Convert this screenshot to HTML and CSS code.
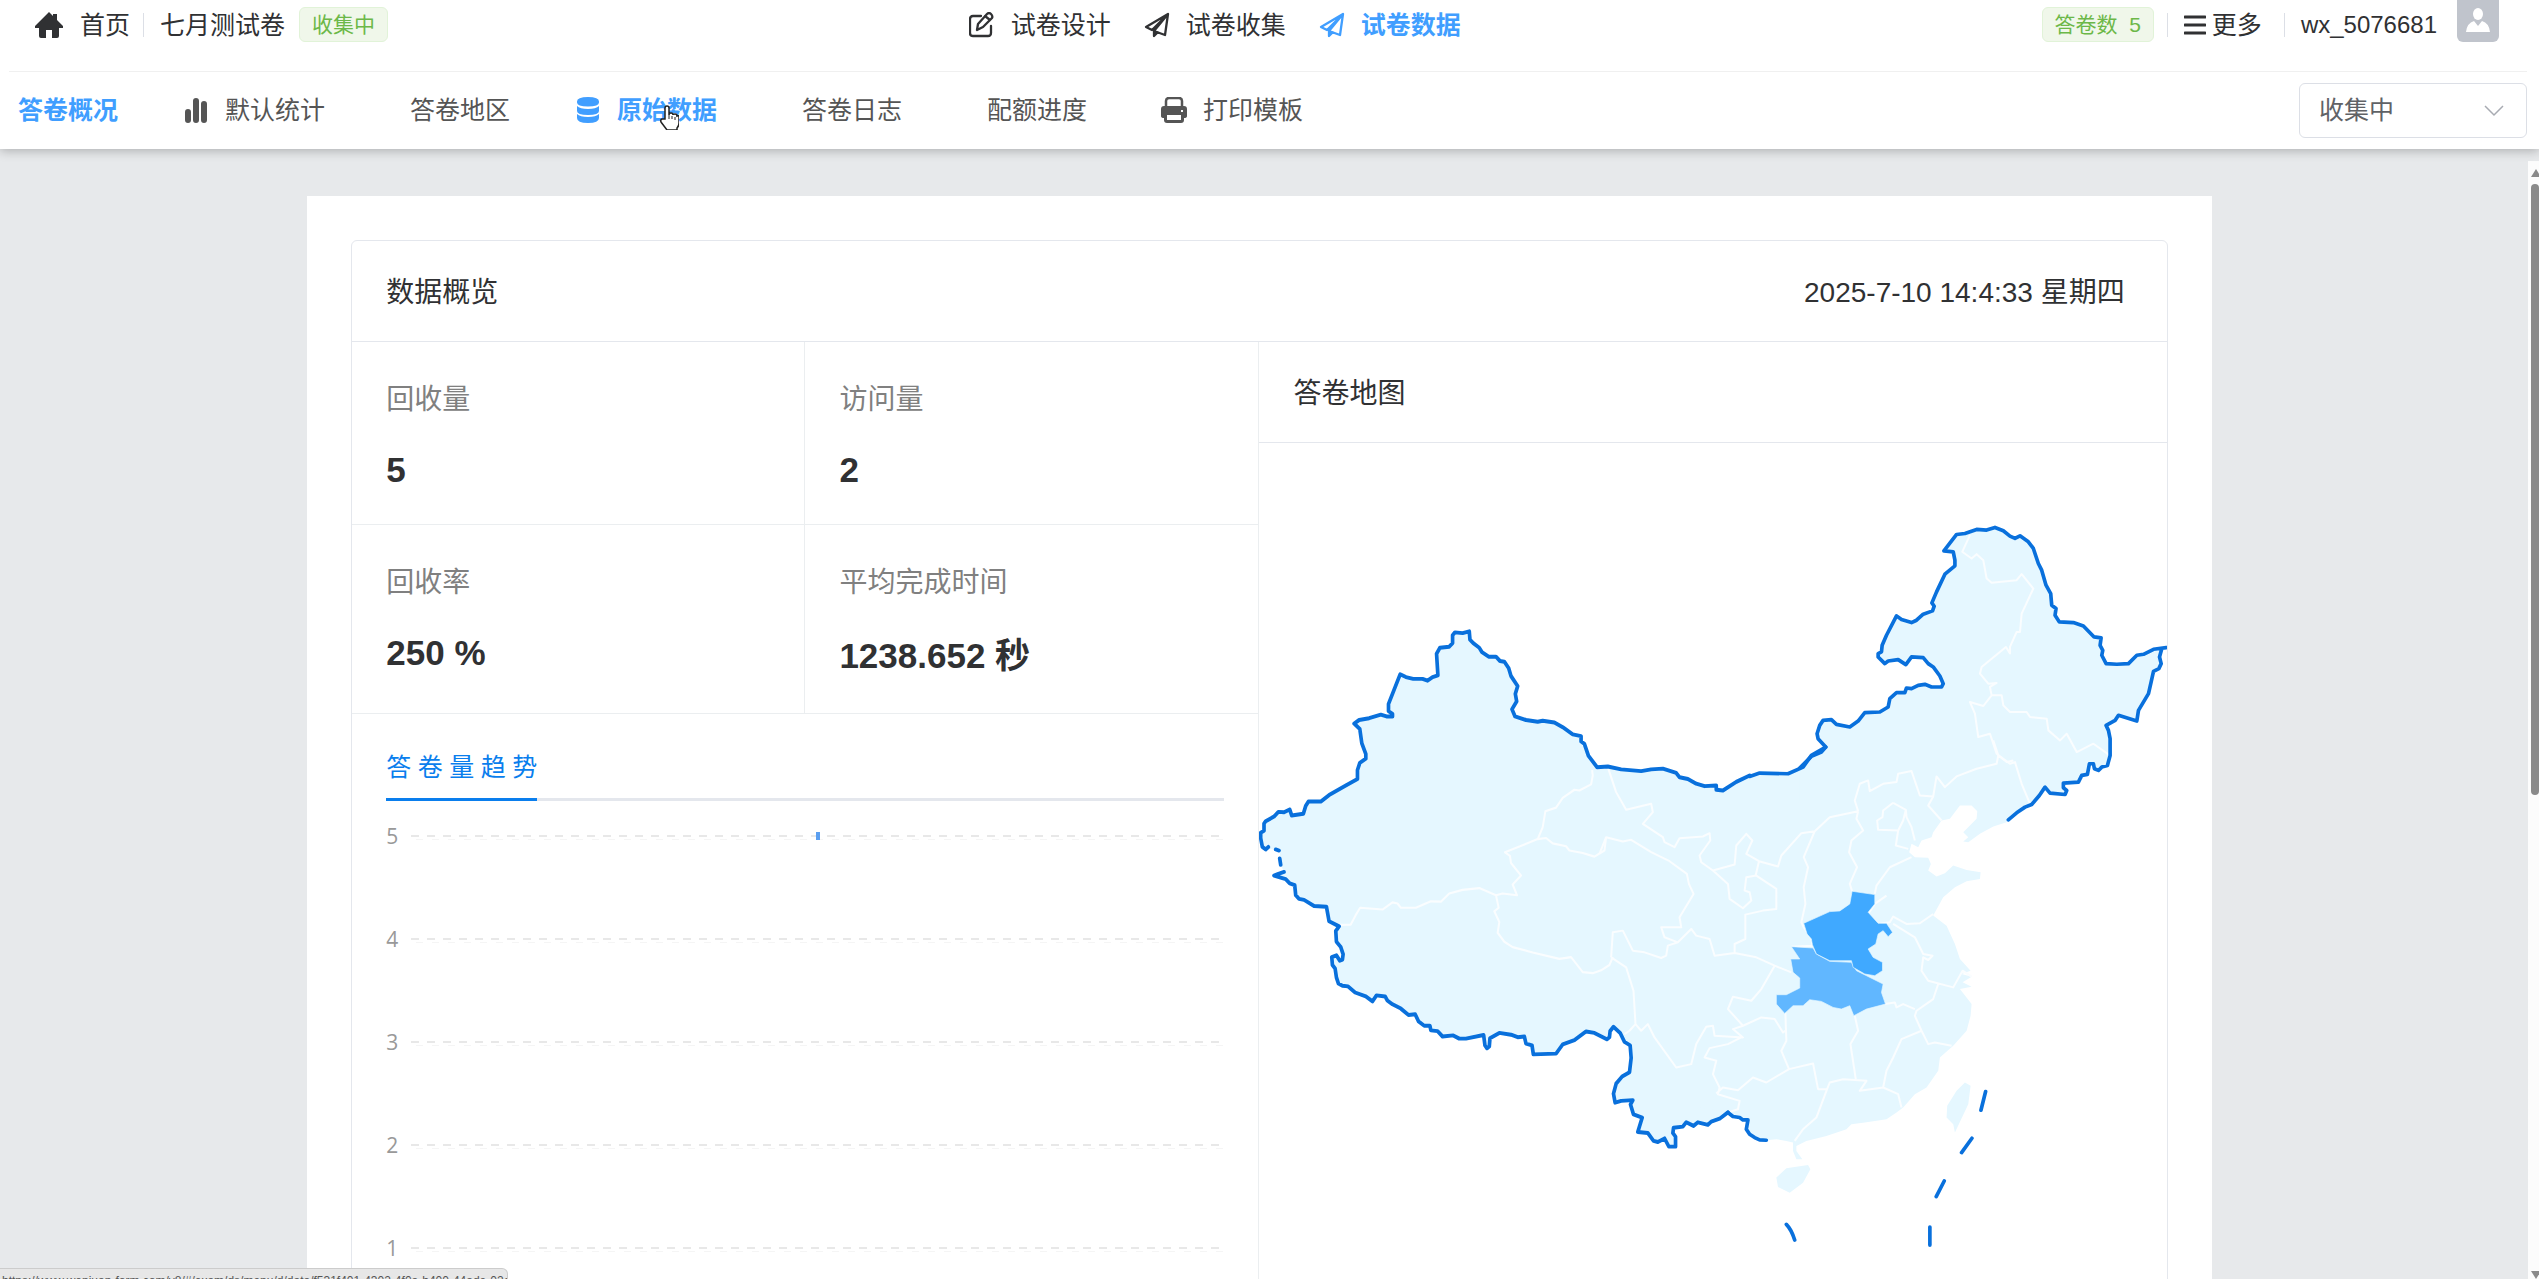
FILE: index.html
```html
<!DOCTYPE html>
<html lang="zh-CN">
<head>
<meta charset="utf-8">
<title>试卷数据 - 答卷概况</title>
<link rel="stylesheet" href="styles.css">
</head>
<body>
<svg class="defs" aria-hidden="true">
  <symbol id="plane" viewBox="0 0 26 26"><path d="M24 2 2 15l6 3zM24 2 10 19l11 4zM10 19v5l4-4" fill="none" stroke="currentColor" stroke-width="2.300" stroke-linejoin="round"/><path d="M9 18v7l6-5z" fill="currentColor"/></symbol>
</svg>
<header class="header">
  <div class="topbar">
    <div class="top-left">
      <a class="home" href="#"><svg class="home-icon" viewBox="0 0 28 26"><path d="M14 0 18 4V2h4v6l6 6v2h-4v8q0 2-2 2h-5v-8h-6v8H6q-2 0-2-2v-8H0v-2z" fill="currentColor"/></svg>首页</a>
      <span class="divider"></span>
      <span>七月测试卷</span>
      <span class="tag">收集中</span>
    </div>
    <nav class="top-nav">
      <a href="#"><svg class="nav-icon" viewBox="0 0 26 26"><path d="M12 4H4q-3 0-3 3v14q0 3 3 3h15q3 0 3-3v-7M8 18l1-6 9-10q2-2 4-0t1 4l-9 9zM16 4l5 4" fill="none" stroke="currentColor" stroke-width="2.300" stroke-linecap="round" stroke-linejoin="round"/></svg>试卷设计</a>
      <a href="#"><svg class="nav-icon"><use href="#plane"/></svg>试卷收集</a>
      <a class="active" href="#"><svg class="nav-icon"><use href="#plane"/></svg>试卷数据</a>
    </nav>
    <div class="top-right">
      <span class="tag">答卷数&nbsp; 5</span>
      <span class="divider"></span>
      <button class="more" type="button"><svg class="more-icon" viewBox="0 0 22 20"><path d="M1 2h20M1 10h20M1 18h20" stroke="currentColor" stroke-width="3" stroke-linecap="round"/></svg>更多</button>
      <span class="divider"></span>
      <span class="user">wx_5076681</span>
      <svg class="avatar" viewBox="0 0 42 42"><ellipse cx="21" cy="14" rx="5" ry="6" fill="#fff"/><path d="M9 32q1-9 8-11l4 5 4-5q7 2 8 11z" fill="#fff"/></svg>
    </div>
  </div>
  <div class="subbar">
    <nav class="sub-nav">
      <a class="active" href="#">答卷概况</a>
      <a href="#"><svg class="sub-icon" viewBox="0 0 34 26"><path d="M9 15v8M17 4v19M25 7v16" stroke="currentColor" stroke-width="6" stroke-linecap="round"/></svg>默认统计</a>
      <a class="plain" href="#">答卷地区</a>
      <a class="active" href="#"><svg class="sub-icon" viewBox="0 0 34 26"><path d="M6 4.500q0-4.500 11-4.500t11 4.500v1q0 4-11 4t-11-4zM6 9q3 3 11 3t11-3v5q0 4-11 4t-11-4zM6 17q3 3 11 3t11-3v4q0 5-11 5t-11-5z" fill="currentColor"/></svg>原始数据
        <svg class="cursor" viewBox="0 0 20 25"><path d="M6 14V3q0-2 2-2t2 2v7q0-2 2-2t2 2q0-1 2-1t2 2q2-1 2 1v6q0 3-2 5v2H8l-6-8q-1-2 1-3z" fill="#fff" stroke="#222" stroke-width="1.500"/><path d="M10 10v4M13 11v3M16 12v3" stroke="#222"/></svg></a>
      <a class="plain" href="#">答卷日志</a>
      <a class="plain" href="#">配额进度</a>
      <a class="print" href="#"><svg class="sub-icon" viewBox="0 0 34 26"><path d="M9 9V4q0-3 3-3h10q3 0 3 3v5" fill="none" stroke="currentColor" stroke-width="2.500"/><path d="M7 9h20q3 0 3 3v7q0 2-3 2v2q0 3-3 3H10q-3 0-3-3v-2q-3 0-3-2v-7q0-3 3-3z" fill="currentColor"/><path d="M10 18h14v5H10zM24 13h2v2h-2z" fill="#fff"/></svg>打印模板</a>
    </nav>
    <div class="select-box">
      <select class="status" aria-label="收集状态"><option>收集中</option></select>
      <svg class="chevron" viewBox="0 0 20 12"><path d="m1 1 9 9 9-9" fill="none" stroke="currentColor" stroke-width="1.500"/></svg>
    </div>
  </div>
</header>
<div class="viewport">
  <main class="content">
    <div class="panel">
      <section class="card">
        <div class="card-head"><span>数据概览</span><time>2025-7-10 14:4:33 星期四</time></div>
        <div class="card-body">
          <div class="left">
            <dl class="stats">
              <div class="stat"><dt>回收量</dt><dd>5</dd></div>
              <div class="stat"><dt>访问量</dt><dd>2</dd></div>
              <div class="stat"><dt>回收率</dt><dd>250 %</dd></div>
              <div class="stat"><dt>平均完成时间</dt><dd class="tall">1238.652 秒</dd></div>
            </dl>
            <div class="trend">
              <div class="tabs"><button class="tab" type="button">答 卷 量 趋 势</button></div>
              <div class="chart">
                <div class="tick"><span>5</span><div class="grid-line"><i class="bar"></i></div></div>
                <div class="tick"><span>4</span><div class="grid-line"></div></div>
                <div class="tick"><span>3</span><div class="grid-line"></div></div>
                <div class="tick"><span>2</span><div class="grid-line"></div></div>
                <div class="tick"><span>1</span><div class="grid-line"></div></div>
                <div class="tick"><span>0</span><div class="grid-line"></div></div>
              </div>
            </div>
          </div>
          <div class="right">
            <div class="map-head">答卷地图</div>
            <svg class="map" viewBox="1260 443 906 836" role="img" aria-label="答卷地图">
              <g class="land">
                <path transform="translate(1250 600) scale(.33333 .35714)" d="M1500 490 1420 532 1400 518 1365 520 1315 500 1290 495 1280 483 1240 471 1175 478 1115 473 1075 465 1043 467 1017 435 1005 402 995 380 970 375 915 342 880 337 830 335 797 325 788 305 802 283 803 240 785 212 778 190 765 172 740 158 718 158 698 145 672 120 660 87 617 90 610 125 572 133 562 150 566 210 535 225 492 220 453 207 418 290 430 325 395 320 315 345 332 360 338 400 350 440 332 455 325 500 240 545 215 563 178 563 163 597 128 602 122 585 88 592 50 618 45 645 35 655 40 690 55 695 80 697 92 700 95 740 105 760 75 770 110 780 137 797 142 830 165 838 195 855 232 857 240 898 270 912 260 930 262 955 280 985 280 1005 262 993 248 998 262 1050 268 1072 297 1080 318 1097 370 1122 382 1105 408 1108 430 1130 478 1160 498 1158 508 1180 542 1195 580 1218 612 1217 650 1226 703 1216 713 1253 722 1225 750 1210 805 1222 825 1220 830 1240 848 1245 852 1270 920 1268 940 1242 1010 1206 1035 1210 1072 1228 1092 1193 1125 1235 1142 1245 1140 1320 1100 1352 1092 1380 1097 1405 1150 1398 1152 1438 1178 1447 1165 1487 1195 1490 1212 1512 1245 1505 1258 1528 1278 1528 1272 1475 1310 1462 1332 1470 1350 1462 1375 1467 1410 1450 1435 1432 1500 1440Z"/>
                <path transform="translate(1600 740) scale(.33333)" d="M300 130 350 137 370 150 440 112 480 98 565 100 610 80 635 45 678 20 660 0H1330V140L1300 190 1228 235 1220 245 1180 258 1140 280 1105 305 1090 303 1105 290 1090 275 1130 235 1132 212 1115 195 1080 195 1050 235 1025 240 1000 275 995 290 965 300 955 320 935 310 928 335 945 350 985 352 993 370 985 390 1010 408 1035 398 1060 375 1100 388 1142 395 1140 415 1100 422 1065 440 1030 470 1000 525 1040 555 1065 610 1080 655 1112 690 1085 700 1115 708 1088 725 1115 738 1080 745 1115 790 1112 825 1100 870 1060 915 1020 950 1015 990 980 1040 945 1060 910 1100 890 1115 860 1135 795 1145 755 1150 740 1165 680 1185 620 1200 590 1215 590 1230 608 1255 590 1255 580 1230 580 1205 560 1200 530 1195 500 1198 465 1190 440 1165 445 1137 400 1130 385 1115 300 1100ZM1095 1025 1112 1035 1105 1090 1065 1175 1060 1150 1040 1130 1042 1095 1070 1050ZM530 1310 560 1282 625 1272 632 1285 610 1325 570 1355 535 1338Z"/>
                <path transform="translate(1800 500) scale(.33333)" d="M0 803 35 768 78 740 52 705 70 660 95 658 110 672 150 680 195 637 240 635 265 620 270 590 315 577 320 563 375 552 430 560 430 540 400 500 370 472 335 470 318 493 295 478 255 490 235 465 247 435 290 347 335 367 370 342 400 330 398 300 435 222 465 195 460 155 432 152 470 103 530 88 585 82 610 92 645 115 660 107 685 125 700 145 715 190 738 255 755 290 770 340 775 365 820 367 850 377 882 410 903 413 905 465 918 490 985 490 1010 465 1060 447 1098 442 1085 450 1078 470 1083 490 1060 510 1045 580 1015 630 1010 662 955 645 918 675 930 715 930 765 922 795 895 810 870 787 862 822 835 845 790 848 800 880 750 878 735 860 700 910 600 900H0Z"/>
              </g>
              <g class="province">
                <path transform="translate(1250 600) scale(.33333 .35714)" d="M1028 475 1030 490 1025 515 990 532 975 530 940 553 920 580 888 590 880 635 865 668 767 705 782 715 785 735 815 770 790 795 803 825 760 820 740 825 690 805 640 810 600 820 575 843 545 842 500 860 455 860 445 848 430 845 400 865 333 860 320 880 305 907 270 908M865 668 890 665 910 680 950 688 960 700 1000 707 1035 717 1065 700 1070 663M740 825 748 860 735 870 750 900 745 930 765 955 790 970 850 985 930 1003 965 998 1000 1040 1030 1043 1055 1035 1080 1020 1090 998"/>
                <path transform="translate(1600 740) scale(.33333)" d="M25 80 50 155 80 208 155 190 160 215 130 250 190 290 195 305 225 320 240 293 310 288 330 278 332 300 300 345 305 365 340 390 405 372 410 315 440 280 458 300 440 340 478 362 535 378 545 345 605 278 645 272 690 230 775 212M0 340 20 290 70 303 95 298 155 335 210 362 262 400 268 430 282 460 240 530 245 560 185 560 195 590 235 605 205 615 200 645 185 652 135 635 100 630 70 570 40 575 35 650M235 605 275 565 290 585 330 595 345 645 405 637 470 650 525 675 575 695M340 390 385 430 390 475 430 503 455 480 450 455 435 450 440 410 470 405 530 445 530 505 490 510 437 522 437 595 405 610 405 637M478 362 468 405M645 272 612 350 625 380 612 440 617 490 605 545 612 560 635 595 638 615 575 618M775 212 770 235 790 270 755 300 748 335 772 380 750 430 757 452M775 212 765 180 780 130 805 120 810 152 850 130 890 125 895 100 935 92 960 165 1000 168 1010 108 1035 140 1070 108 1130 85 1190 70 1195 45 1180 0M1195 45 1220 65 1240 60M1000 168 985 195 1025 240M880 187 850 210 848 230 832 240 835 268 895 270 910 240 918 208 880 187M918 208 920 230 935 260 945 300M895 270 888 315 925 325M935 350 870 380 830 435 825 460M860 465 825 490 805 520 835 550 870 545 880 528 920 550 960 548 1000 520M880 550 945 590 970 640 998 645 985 658 970 650 965 690 985 720 1060 740 1088 690 1115 708M1015 730 1000 775 950 810 945 825 965 870 985 910 1005 905 1055 915M855 790 885 785 890 800 910 790 945 805M965 870 905 895 880 950 860 990 850 1040M765 825 775 870 752 910 768 1015M682 1045 690 1025 730 1015 800 1020 780 1050 850 1040 895 1060 905 1100M682 1045 650 1130 610 1165 585 1200M568 985 640 968 655 1045 682 1045M557 815 560 900 545 930 568 985 500 1025 460 1010 415 1048 370 1040 350 1058M425 890 385 910 330 922 315 950 350 960 340 1000 360 1040 355 1060 420 1080 415 1105 385 1115M525 675 485 745 455 780 400 768 385 805 430 855 485 830 525 835 550 875 557 870M430 855 400 865 430 890 345 885 340 855 320 858 290 910 275 970 230 980 165 890 145 850 125 870 108 850M35 650 80 680 102 750 108 850 90 870 75 880"/>
                <path transform="translate(1800 500) scale(.33333)" d="M510 105 487 155 515 175 530 162 550 180 560 235 575 248 650 240 665 222 700 265 665 340 660 395 650 395 630 440 630 460 618 440 545 500 540 520 565 550 590 548 570 560 575 585 605 585 610 615 630 635 680 635 690 650 740 655 745 690 780 720 800 700 830 755 880 730 925 762M575 585 550 617 510 605 525 640 535 710 570 700 590 760 630 790 645 785 665 850 690 910"/>
              </g>
              <g transform="translate(1600 740) scale(.33333)">
                <path class="hubei" d="M575 618 640 622 650 640 690 662 755 665 770 690 850 730 845 755 857 790 800 805 762 825 750 795 725 805 700 800 665 782 630 777 610 795 580 795 555 818 530 790 530 762 560 762 600 742 600 712 580 695 573 655 600 655Z"/>
                <path class="henan" d="M757 452 825 462 825 490 805 515 835 548 860 548 878 575 865 588 850 570 835 580 828 610 805 625 820 650 848 665 848 690 825 705 795 700 760 680 755 660 690 660 650 640 638 612 635 595 622 580 612 548 690 513 720 511 750 490Z"/>
              </g>
              <g class="frontier">
                <path transform="translate(1250 600) scale(.33333 .35714)" d="M1500 490 1460 508 1420 532 1400 530 1400 518 1365 520 1340 513 1315 500 1290 495 1280 483 1240 471 1205 473 1175 478 1115 473 1075 465 1043 467 1017 435 1005 402 995 395 995 380 970 375 940 355 915 342 880 337 865 340 830 335 797 325 788 305 802 283 798 262 805 240 785 212 778 190 765 172 752 170 740 158 718 158 698 145 690 133 672 120 662 110 660 87 640 92 617 90 610 98 610 120 600 130 572 133 562 150 566 210 550 215 535 225 520 220 492 220 470 215 453 207 418 290 418 310 430 318 430 325 412 325 395 320 360 330 330 335 315 345 332 360 338 400 350 430 350 443 332 455 325 475 325 500 290 518 240 545 215 563 178 563 170 575 163 597 128 602 122 585 105 593 88 592 75 605 50 618 45 625 45 645 35 650 35 665 40 690 50 697 58 690M80 697 90 700M92 722 95 740M105 760 88 765 75 770 110 780 122 792 137 797 140 825 150 835 165 838 195 855 232 857 240 898 270 912 260 925 262 955 275 970 282 990 280 1005 272 1008 262 993 248 998 250 1020 258 1030 262 1055 268 1072 280 1078 297 1080 318 1097 350 1108 370 1122 382 1105 408 1108 415 1120 430 1130 455 1142 478 1160 498 1158 508 1178 525 1190 542 1190 545 1203 565 1205 580 1220 612 1217 630 1226 650 1226 703 1216 707 1245 713 1253 720 1248 722 1225 750 1210 785 1215 805 1222 825 1220 830 1240 848 1245 852 1270 920 1268 940 1242 975 1230 1010 1206 1035 1210 1072 1228 1080 1222 1082 1205 1092 1193 1112 1210 1125 1235 1142 1245 1145 1280 1140 1320 1118 1332 1100 1352 1092 1380 1097 1405 1115 1400 1150 1398 1143 1410 1152 1438 1178 1447 1165 1487 1195 1490 1212 1512 1225 1515 1245 1505 1258 1528 1278 1528 1278 1500 1270 1490 1272 1475 1300 1472 1310 1460 1332 1470 1345 1460 1375 1467 1385 1458 1410 1450 1435 1432"/>
                <path transform="translate(1600 740) scale(.33333)" d="M450 108 480 98 565 100 610 80 635 45 678 20M385 1115 400 1127 420 1130 430 1137 445 1137 440 1165 450 1180 465 1190 480 1197 500 1198M1157 1052 1143 1108M1116 1192 1085 1235M1033 1320 1009 1367M990 1458V1512M560 1450Q575 1465 585 1497"/>
                <path transform="translate(1800 500) scale(.33333)" d="M0 803 35 768 65 755 78 740 55 715 52 700 60 675 70 660 95 658 110 672 150 680 175 662 195 637 240 635 265 620 270 595 290 577 315 577 320 563 335 565 355 555 375 552 395 560 425 560 430 550 420 527 400 500 385 490 370 472 335 470 318 493 295 478 265 482 255 490 235 470 235 460 245 455 247 435 260 405 290 347 305 358 335 367 350 360 370 342 398 332 403 318 396 308 410 275 435 222 465 197 465 180 460 155 432 152 470 103 495 100 530 88 560 90 585 82 610 92 630 108 645 115 660 107 685 125 700 145 715 190 725 210 738 255 752 280 755 315 768 325 765 345 778 365 820 367 850 377 882 410 903 413 900 435 908 450 905 465 918 490 950 492 985 490 1010 465 1030 462 1060 447 1098 442M1085 445 1078 470 1083 490 1076 505 1060 513 1053 545 1045 580 1015 630 1010 662 955 645 945 660 918 675 925 690 930 715 930 765 922 795 905 800 895 810 883 805 880 790 868 790 862 822 845 825 835 845 790 848 790 862 800 870 795 882 750 878 735 860 718 885 695 912 675 920 650 937 625 958"/>
              </g>
            </svg>
          </div>
        </div>
      </section>
    </div>
  </main>
  <div class="scrollbar" aria-hidden="true"><i class="arrow"></i><i class="thumb"></i><i class="arrow down"></i></div>
</div>
<div class="link-preview">https://www.wenjuan-form.com/v8/#/exam/ds/menu/d/data/f531f401-4302-4f0a-b400-44ade-02ee01</div>
</body>
</html>
```
FILE: styles.css
```css
* { box-sizing: border-box; }
body {
  margin: 0;
  height: 100vh;
  overflow: hidden;
  display: flex;
  flex-direction: column;
  background: #e7e9eb;
  color: #303133;
  font: 25px/36px "Liberation Sans", "Noto Sans CJK SC", sans-serif;
}
a { color: inherit; text-decoration: none; }
button { font: inherit; color: inherit; background: none; border: 0; padding: 0; cursor: pointer; }
svg { display: block; flex: none; }
.defs { position: absolute; width: 0; height: 0; }

/* header */
.header {
  position: relative;
  z-index: 1;
  flex: none;
  padding: 0 12px 0 9px;
  background: #fff;
  box-shadow: 0 2px 10px rgba(0, 0, 0, .25);
}
.topbar { display: flex; align-items: center; height: 71px; padding-bottom: 22px; }
.top-left { display: flex; align-items: center; width: 38%; padding-left: 26px; }
.home { display: flex; align-items: center; gap: 17px; }
.home-icon { width: 28px; height: 26px; }
.divider { width: 1px; height: 24px; margin: 0 16px 0 13px; background: #dcdfe6; }
.tag {
  margin-left: 14px;
  padding: 0 12px;
  border: 1px solid #e1f3d8;
  border-radius: 6px;
  background: #f0f7ea;
  color: #6cb848;
  font-size: 21px;
  line-height: 33px;
  white-space: nowrap;
}
.top-nav { display: flex; gap: 33px; padding-left: 3px; }
.top-nav a { display: flex; align-items: center; gap: 16px; white-space: nowrap; }
.nav-icon { width: 26px; height: 26px; }
.active { color: #409eff; font-weight: bold; }
.top-right { display: flex; align-items: center; align-self: stretch; margin-left: auto; padding-right: 28px; white-space: nowrap; }
.more { display: flex; align-items: center; gap: 6px; margin-right: 9px; }
.more-icon { width: 22px; height: 20px; }
.user { margin-right: 20px; font-size: 24px; }
.avatar { align-self: flex-start; width: 42px; height: 42px; border-radius: 0 0 6px 6px; background: #c0c4cc; }
.subbar { display: flex; align-items: center; justify-content: space-between; height: 78px; border-top: 1px solid #f0f0f0; }
.sub-nav { display: flex; gap: 61px; padding: 0 0 2px 9px; color: #555; }
.sub-nav a { position: relative; display: flex; align-items: center; gap: 12px; white-space: nowrap; }
.sub-nav .plain { padding-left: 24px; }
.sub-nav .print { padding-left: 9px; }
.sub-nav .active { color: #409eff; }
.sub-icon { width: 34px; height: 26px; }
.cursor { position: absolute; left: 88px; top: 13px; width: 20px; height: 25px; }
.select-box { display: grid; align-items: center; width: 228px; }
.status {
  grid-area: 1 / 1;
  appearance: none;
  height: 55px;
  padding: 0 19px 2px;
  border: 1px solid #dcdfe6;
  border-radius: 6px;
  background: #fff;
  color: #606266;
  font: inherit;
}
.chevron { grid-area: 1 / 1; justify-self: end; width: 20px; height: 12px; margin-right: 23px; color: #a8abb2; pointer-events: none; }

/* scrolling area */
.viewport { flex: 1; min-height: 0; display: flex; overflow: hidden; }
.content { flex: 1; min-width: 0; padding: 47px 9px 0 0; }
.panel { width: 75.6%; margin: 0 auto; padding: 44px; background: #fff; }
.scrollbar { width: 11px; margin-top: 12px; padding: 8px 0 0 3px; background: #fcfcfc; display: flex; flex-direction: column; gap: 7px; }
.arrow { border: 5px solid transparent; border-top-width: 0; border-bottom: 8px solid #8a8a8a; }
.arrow.down { margin: auto 0 0; border-top: 8px solid #8a8a8a; border-bottom-width: 0; }
.thumb { height: 55%; border-radius: 4px; background: #8a8a8a; }

/* overview card */
.card { border: 1px solid #e4e7ed; border-radius: 6px; }
.card-head {
  display: flex;
  align-items: center;
  justify-content: space-between;
  height: 101px;
  padding: 4px 42px 0 34px;
  border-bottom: 1px solid #e4e7ed;
  font-size: 28px;
}
.card-body { display: grid; grid-template-columns: 1fr 1fr; }
.left { border-right: 1px solid #ebeef0; }
.stats { display: grid; grid-template-columns: 1fr 1fr; margin: 0; }
.stat { padding: 38px 34px 34px; border-bottom: 1px solid #ebeef0; }
.stat:nth-child(odd) { border-right: 1px solid #ebeef0; }
.stat dt { margin-bottom: 30px; color: #808080; font-size: 28px; line-height: 40px; }
.stat dd { margin: 0; font-size: 35px; font-weight: bold; line-height: 40px; }
.stat .tall { line-height: 46px; }
.trend { padding: 28px 34px 0; }
.tabs { border-bottom: 3px solid #e4e7ed; }
.tab {
  display: block;
  margin-bottom: -3px;
  padding: 6px 0 14px;
  border-bottom: 3px solid #0a7eed;
  color: #0a7eed;
  font-family: "Open Sans", "Noto Sans CJK SC", sans-serif;
}
.chart { padding-top: 17px; color: #999; font: 21px/36px "Open Sans", sans-serif; }
.tick { display: flex; align-items: center; height: 36px; margin-bottom: 67px; }
.tick span { width: 25px; }
.grid-line {
  flex: 1;
  height: 8px;
  background:
    repeating-linear-gradient(90deg, #e8e8e8 0 8px, transparent 8px 16px) 0 3px / 100% 2px no-repeat,
    repeating-linear-gradient(90deg, transparent 0 5px, #f5f5f5 5px 12px, transparent 12px 16px) 0 7px / 100% 1px no-repeat;
}
.bar { display: block; width: 4px; height: 8px; margin: 0 auto; background: #5b9ff0; }
.map-head { height: 101px; padding-left: 34px; border-bottom: 1px solid #e4e7ed; font-size: 28px; line-height: 104px; }

/* map */
.map { width: 100%; }
.land { fill: #e5f7ff; }
.province, .frontier { fill: none; stroke-linejoin: round; }
.province path { stroke: #fafdff; stroke-width: 6px; }
.frontier path { stroke: #0970dc; stroke-width: 11px; stroke-linecap: round; }
.henan, .hubei { stroke: #e5f7ff; stroke-width: 2px; }
.henan { fill: #40a9ff; }
.hubei { fill: #61b7ff; }

.link-preview {
  position: absolute;
  left: 0;
  bottom: -16px;
  z-index: 2;
  width: 508px;
  height: 27px;
  padding-left: 2px;
  overflow: hidden;
  border: 1px solid #ccc;
  border-left: 0;
  border-radius: 0 6px 0 0;
  background: #e7e7e7;
  color: #555;
  font-size: 12px;
  line-height: 24px;
  white-space: nowrap;
}
```
